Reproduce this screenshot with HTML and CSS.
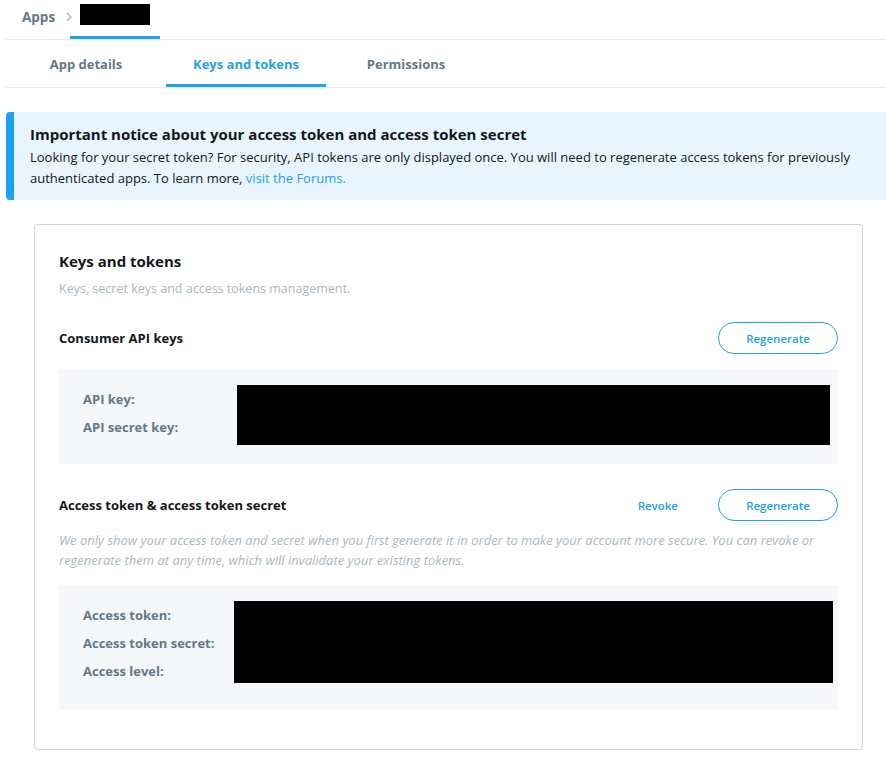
FILE: index.html
```html
<!DOCTYPE html>
<html>
<head>
<meta charset="utf-8">
<link rel="stylesheet" href="styles.css">
</head>
<body>
<div class="page">
  <nav class="crumbs">
    <span class="crumb">Apps</span>
    <span class="crumb-sep">
      <svg width="8" height="12" viewBox="0 0 8 12"><path d="M2 2 L6 6 L2 10" fill="none" stroke="#aab8c2" stroke-width="1.4"/></svg>
    </span>
    <span class="crumb crumb-active"><span class="redact redact-name"></span></span>
  </nav>
  <nav class="tabs">
    <span class="tab">App details</span>
    <span class="tab tab-active">Keys and tokens</span>
    <span class="tab">Permissions</span>
  </nav>

  <div class="notice">
    <div class="notice-title">Important notice about your access token and access token secret</div>
    <div class="notice-body">Looking for your secret token? For security, API tokens are only displayed once. You will need to regenerate access tokens for previously authenticated apps. To learn more, <span class="link">visit the Forums.</span></div>
  </div>

  <section class="card">
    <h2 class="card-title">Keys and tokens</h2>
    <p class="card-sub">Keys, secret keys and access tokens management.</p>

    <div class="sec-head sec-first">
      <h3 class="sec-title">Consumer API keys</h3>
      <div class="actions">
        <button class="btn">Regenerate</button>
      </div>
    </div>
    <div class="kv kv-consumer">
      <div class="labels">
        <div class="label">API key:</div>
        <div class="label">API secret key:</div>
      </div>
      <div class="redact redact-consumer"></div>
    </div>

    <div class="sec-head sec-second">
      <h3 class="sec-title">Access token &amp; access token secret</h3>
      <div class="actions">
        <span class="revoke">Revoke</span>
        <button class="btn">Regenerate</button>
      </div>
    </div>
    <p class="sec-note">We only show your access token and secret when you first generate it in order to make your account more secure. You can revoke or regenerate them at any time, which will invalidate your existing tokens.</p>
    <div class="kv kv-access">
      <div class="labels">
        <div class="label">Access token:</div>
        <div class="label">Access token secret:</div>
        <div class="label">Access level:</div>
      </div>
      <div class="redact redact-access"></div>
    </div>
  </section>
</div>
</body>
</html>
```

FILE: styles.css
```css
* { box-sizing: border-box; }
html, body { margin: 0; padding: 0; background: #fff; }
body {
  font-family: "Open Sans", "Noto Sans", sans-serif;
  color: #14171a;
  width: 886px;
  overflow: hidden;
}
.page { padding-left: 6px; }

.crumbs {
  display: flex;
  align-items: stretch;
  height: 40px;
  border-bottom: 1px solid #e6ecf0;
}
.crumb {
  display: flex;
  align-items: center;
  font-size: 13.5px;
  font-weight: 700;
  color: #657786;
}
.crumbs > .crumb:first-child { padding-left: 16px; padding-right: 10px; padding-bottom: 6px; }
.crumb-sep { display: flex; align-items: center; padding-bottom: 6px; }
.crumb-active {
  width: 90px;
  margin-left: -3px;
  padding-left: 10px;
  border-bottom: 3px solid #1da1f2;
  align-items: flex-start;
  padding-top: 4px;
}
.redact { background: #000; }
.redact-name { width: 70px; height: 21px; }

.tabs {
  display: flex;
  height: 48px;
  border-bottom: 1px solid #e6ecf0;
}
.tab {
  width: 160px;
  display: flex;
  align-items: center;
  justify-content: center;
  font-size: 13px;
  font-weight: 700;
  color: #657786;
  border-bottom: 3px solid transparent;
  padding-top: 3px;
}
.tab-active { color: #1da1f2; border-bottom-color: #1da1f2; }

.notice {
  margin-top: 24px;
  background: #e8f5fe;
  border-left: 8px solid #1da1f2;
  border-radius: 4px 0 0 4px;
  padding: 11px 16px 11px 16px;
}
.notice-title { font-size: 15px; font-weight: 700; line-height: 22px; margin-bottom: 2px; }
.notice-body { font-size: 13px; line-height: 21px; color: #14171a; }
.link { color: #1da1f2; }

.card {
  margin: 24px 23px 10px 28px;
  border: 1px solid #ccd6dd;
  border-radius: 4px;
  padding: 25px 24px 39px 24px;
}
.card-title { margin: 0; font-size: 15px; font-weight: 700; line-height: 22px; }
.card-sub { margin: 8px 0 0; font-size: 12.5px; line-height: 18px; color: #aab8c2; }

.sec-head { display: flex; align-items: center; justify-content: space-between; height: 32px; }
.sec-first { margin-top: 24px; }
.sec-second { margin-top: 25px; }
.sec-title { margin: 0; font-size: 13px; font-weight: 700; }
.actions { display: flex; align-items: center; }
.revoke { color: #1da1f2; font-size: 11.5px; font-weight: 600; margin-right: 40px; }
.btn {
  width: 120px;
  height: 32px;
  border: 1px solid #1da1f2;
  border-radius: 16px;
  background: #fff;
  color: #1da1f2;
  font-family: inherit;
  font-size: 11.5px;
  font-weight: 600;
  padding: 0;
}

.kv {
  display: flex;
  background: #f5f8fa;
}
.kv-consumer { margin-top: 15px; padding: 16px 8px 19px 24px; }
.kv-access { margin-top: 15px; padding: 16px 5px 25px 24px; }
.labels { flex: none; }
.kv-consumer .labels { width: 154px; }
.kv-access .labels { width: 151px; }
.label { font-size: 13px; font-weight: 700; color: #657786; line-height: 28px; }
.redact-consumer { flex: 1; height: 60px; }
.redact-access { flex: 1; height: 82px; }

.sec-note {
  margin: 9px 0 0;
  font-size: 13px;
  font-style: italic;
  line-height: 20px;
  color: #aab8c2;
}
```
